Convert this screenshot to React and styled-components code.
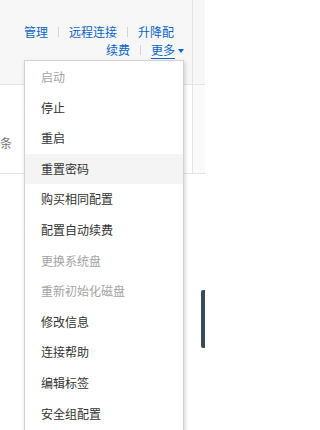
import React from "react";
import styled, { createGlobalStyle } from "styled-components";

const GlobalStyle = createGlobalStyle`
  html, body { margin: 0; padding: 0; background: #ffffff; }
  body {
    font-family: "Noto Sans CJK SC", "Noto Sans", "Liberation Sans", sans-serif;
    font-size: 12px;
    color: #333;
  }
  * { box-sizing: border-box; }
`;

const Page = styled.div`
  position: relative;
  width: 205px;
  height: 430px;
  overflow: hidden;
  background: #fff;
`;

const Row = styled.div`
  display: flex;
  height: ${(p) => p.$h}px;
  background: ${(p) => p.$bg};
  border-bottom: 1px solid #e4e4e4;
`;

const OpsCell = styled.div`
  width: 193px;
  flex: none;
  border-right: 1px solid #e4e4e4;
  display: flex;
  flex-direction: column;
  align-items: flex-end;
  padding: ${(p) => p.$pt}px 8px 0 0;
`;

const TextCell = styled.div`
  width: 193px;
  flex: none;
  border-right: 1px solid #e4e4e4;
  padding-top: 49px;
  line-height: 18px;
  color: #777;
  font-size: 12px;
`;

const EdgeCell = styled.div`
  flex: 1;
  background: ${(p) => p.$bg};
`;

const LinkLine = styled.div`
  display: flex;
  align-items: center;
  height: 18px;
  line-height: 18px;
  margin-right: ${(p) => p.$mr || 0}px;
`;

const Link = styled.span`
  color: #0b65c6;
  text-decoration: ${(p) => (p.$active ? "underline" : "none")};
  text-underline-offset: 3px;
  white-space: nowrap;
`;

const Sep = styled.span`
  width: 1px;
  height: 10px;
  margin: 0 10px;
  background: #d4d4d4;
`;

const Caret = styled.span`
  width: 0;
  height: 0;
  margin-left: 3px;
  margin-top: 1px;
  border-top: 4px solid #0b65c6;
  border-left: 3.5px solid transparent;
  border-right: 3.5px solid transparent;
`;

const Menu = styled.ul`
  position: absolute;
  left: 24px;
  top: 60px;
  width: 160px;
  margin: 0;
  padding: 1px 0 8px;
  list-style: none;
  background: #fff;
  border: 1px solid #d2d2d2;
  box-shadow: 1px 2px 4px rgba(0, 0, 0, 0.18);
`;

const Item = styled.li`
  height: 30.6px;
  line-height: 30.6px;
  padding-left: 16px;
  font-size: 12px;
  white-space: nowrap;
  color: ${(p) => (p.$disabled ? "#a3a3a3" : "#333")};
  background: ${(p) => (p.$hover ? "#f4f4f4" : "transparent")};
`;

const SideTab = styled.div`
  position: absolute;
  right: 0;
  top: 290px;
  width: 4px;
  height: 58px;
  background: #394a5b;
  border-radius: 2px 0 0 2px;
`;

const items = [
  { t: "启动", d: true },
  { t: "停止" },
  { t: "重启" },
  { t: "重置密码", h: true },
  { t: "购买相同配置" },
  { t: "配置自动续费" },
  { t: "更换系统盘", d: true },
  { t: "重新初始化磁盘", d: true },
  { t: "修改信息" },
  { t: "连接帮助" },
  { t: "编辑标签" },
  { t: "安全组配置" },
];

export default function App() {
  return (
    <>
      <GlobalStyle />
      <Page>
        <Row $h={85} $bg="#f7f7f7">
          <OpsCell $pt={23}>
            <LinkLine $mr={10}>
              <Link>管理</Link>
              <Sep />
              <Link>远程连接</Link>
              <Sep />
              <Link>升降配</Link>
            </LinkLine>
            <LinkLine>
              <Link>续费</Link>
              <Sep />
              <Link $active>更多</Link>
              <Caret />
            </LinkLine>
          </OpsCell>
          <EdgeCell $bg="#f7f7f7" />
        </Row>
        <Row $h={89} $bg="#fff">
          <TextCell>条</TextCell>
          <EdgeCell $bg="#fafafa" />
        </Row>
        <Menu>
          {items.map((it) => (
            <Item key={it.t} $disabled={it.d} $hover={it.h}>
              {it.t}
            </Item>
          ))}
        </Menu>
        <SideTab />
      </Page>
    </>
  );
}
